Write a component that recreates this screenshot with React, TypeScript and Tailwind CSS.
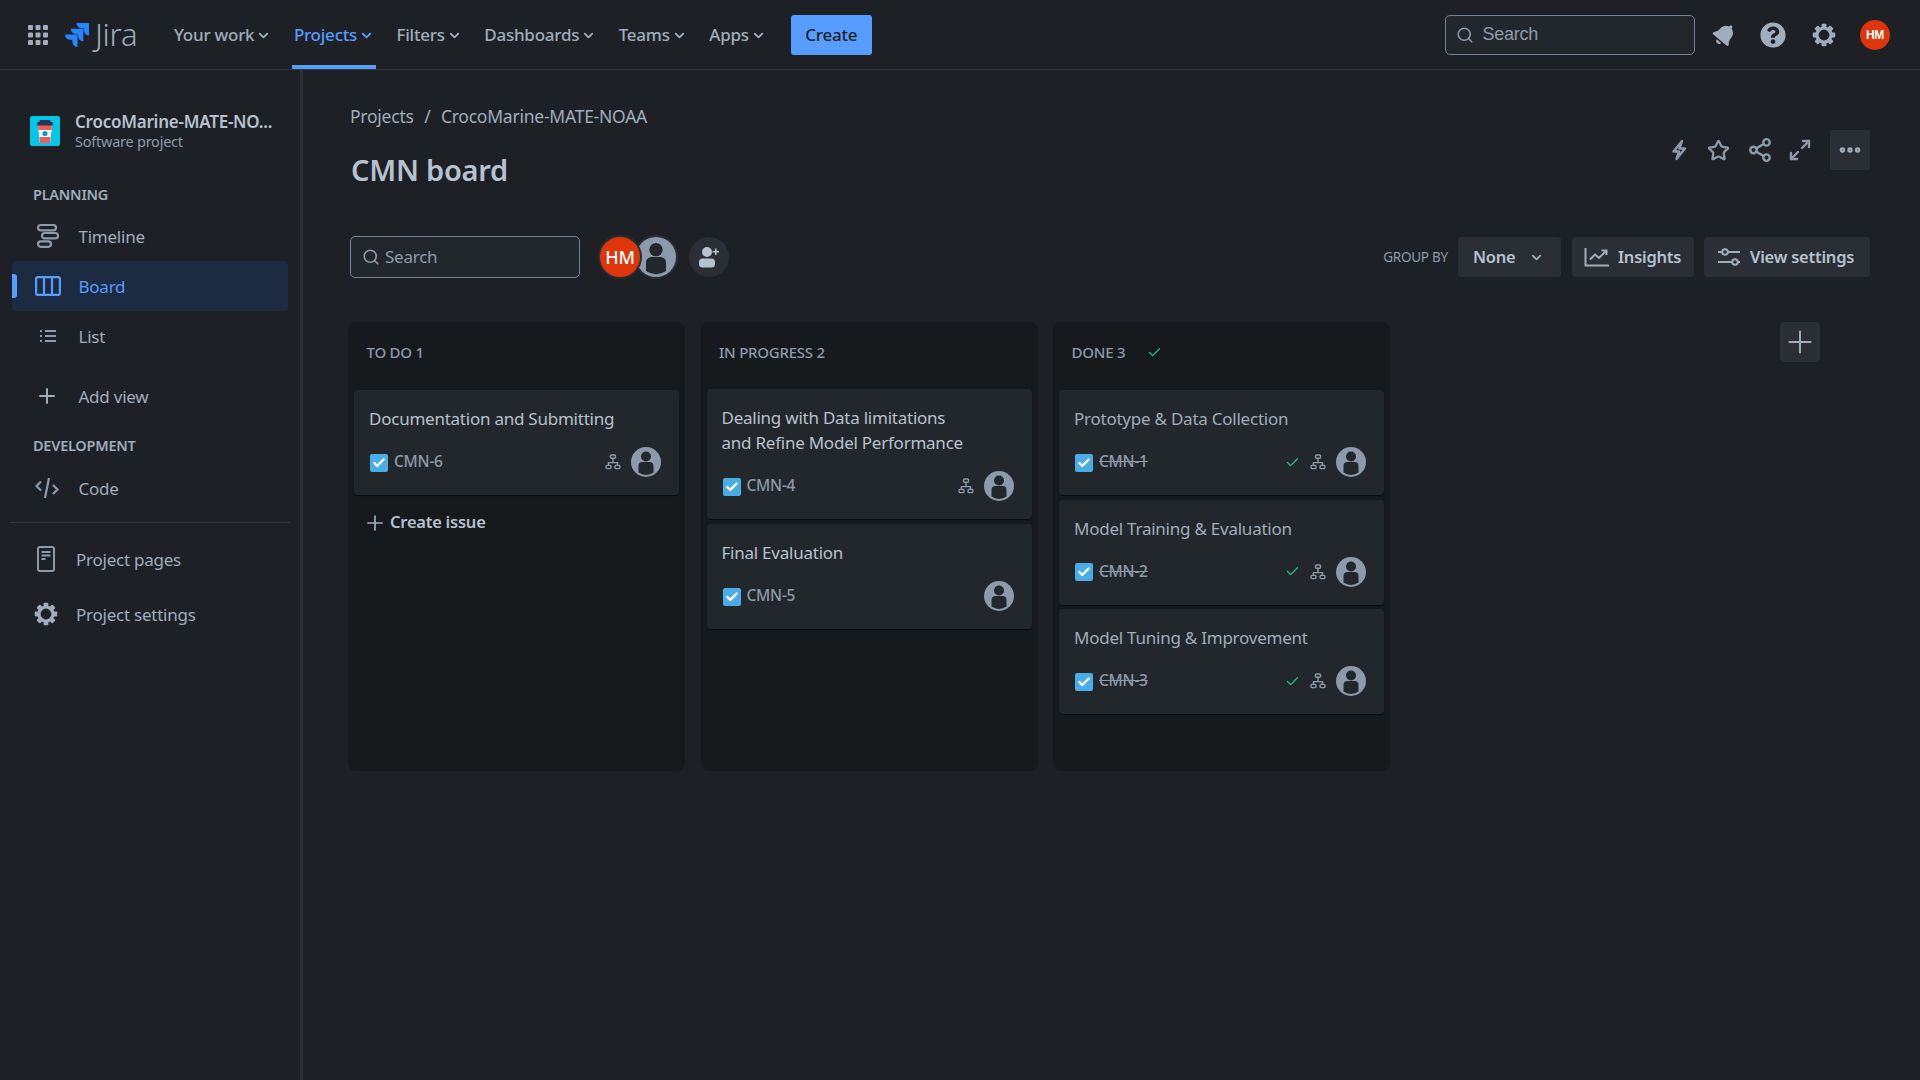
import { Check, ChevronDown, Ellipsis, Maximize2, Plus, Search, Share2, Star } from "lucide-react";
import { ReactNode } from "react";
import { FaBell, FaQuestionCircle } from "react-icons/fa";
import { SiJira } from "react-icons/si";

const font = "font-['Noto_Sans','Open_Sans',sans-serif] tracking-[-0.015em]";

function Gear({ size = 24 }: { size?: number }) {
    return (
        <svg width={size} height={size} viewBox="0 0 24 24" fill="none">
            {[0, 45, 90, 135, 180, 225, 270, 315].map((a) => (
                <rect key={a} x="9.6" y="0.8" width="4.8" height="4.4" rx="1" fill="#9FADBC" transform={`rotate(${a} 12 12)`} />
            ))}
            <circle cx="12" cy="12" r="7" stroke="#9FADBC" strokeWidth="3.2" />
        </svg>
    );
}

function WaffleIcon() {
    return (
        <svg width="20" height="20" viewBox="0 0 20 20" fill="#9FADBC">
            {[0, 7.5, 15].flatMap((y) =>
                [0, 7.5, 15].map((x) => <rect key={`${x}-${y}`} x={x} y={y} width="5" height="5" rx="1" />)
            )}
        </svg>
    );
}

function Avatar({ size = 36 }: { size?: number }) {
    return (
        <svg width={size} height={size} viewBox="0 0 30 30">
            <circle cx="15" cy="15" r="15" fill="#8C9BAB" />
            <circle cx="15" cy="9.5" r="5" fill="#22272B" />
            <path d="M7.5 19a4 4 0 0 1 4-4h7a4 4 0 0 1 4 4v6.5A14.5 14.5 0 0 1 15 28a14.5 14.5 0 0 1-7.5-2.5z" fill="#22272B" />
        </svg>
    );
}

function ChildIcon({ size = 16 }: { size?: number }) {
    return (
        <svg width={size} height={size} viewBox="0 0 16 16" fill="none" stroke="#8C9BAB" strokeWidth="1.4">
            <rect x="5.5" y="1" width="5" height="3.2" rx="1" />
            <rect x="1" y="11.4" width="5" height="3.2" rx="1" />
            <rect x="10" y="11.4" width="5" height="3.2" rx="1" />
            <path d="M8 4.2v4.4M3.5 11.4V8.6h9v2.8" />
        </svg>
    );
}

function TaskBox() {
    return (
        <span className="ml-[1px] mt-[1px] flex h-[18px] w-[18px] items-center justify-center rounded-[2px] bg-[#4BADE8]">
            <Check size={14} strokeWidth={4} color="#ffffff" />
        </span>
    );
}

function BoltIcon() {
    return (
        <svg width="16" height="22" viewBox="0 0 16 22" fill="none" stroke="#8C9BAB" strokeWidth="2.4" strokeLinejoin="round">
            <path d="M11 2 2.500 12.500H8L5.500 20 14 9.500H8.500z" />
        </svg>
    );
}

function TimelineIcon() {
    return (
        <svg width="24" height="26" viewBox="0 0 24 26" fill="none" stroke="#8C9BAB" strokeWidth="2.2">
            <rect x="2" y="2" width="18" height="5.4" rx="2.7" />
            <rect x="6" y="10" width="16" height="5.4" rx="2.7" />
            <rect x="2" y="18.4" width="13" height="5.4" rx="2.7" />
        </svg>
    );
}

function BoardIcon() {
    return (
        <svg width="26" height="20" viewBox="0 0 26 20" fill="none" stroke="#579DFF" strokeWidth="2.2">
            <rect x="1.1" y="1.1" width="23.8" height="17.8" rx="2" />
            <path d="M9 1v18M17 1v18" />
        </svg>
    );
}

function ListIcon() {
    return (
        <svg width="16" height="14" viewBox="0 0 16 14" fill="none" stroke="#8C9BAB" strokeWidth="2">
            <path d="M5 2h11M5 7h11M5 12h11" />
            <path d="M0 2h2M0 7h2M0 12h2" />
        </svg>
    );
}

function CodeIcon() {
    return (
        <svg width="24" height="22" viewBox="0 0 24 22" fill="none" stroke="#8C9BAB" strokeWidth="2.2">
            <path d="M6 4.5 1.5 9 6 13.5M18 8l4.5 4.5L18 17M14 1l-4 20" />
        </svg>
    );
}

function PageIcon() {
    return (
        <svg width="18" height="26" viewBox="0 0 18 26" fill="none" stroke="#8C9BAB" strokeWidth="2">
            <rect x="1" y="1" width="16" height="24" rx="2" />
            <path d="M4.5 6h9M4.5 9.5h9M4.5 13h4" />
        </svg>
    );
}

function ProjectIcon() {
    return (
        <svg width="30" height="30" viewBox="0 0 30 30" className="shrink-0">
            <rect width="30" height="30" rx="2" fill="#00C7E6" />
            <path d="M8 9h14l-1.6 17a1 1 0 0 1-1 1h-8.800a1 1 0 0 1-1-1z" fill="#FFFFFF" />
            <path d="M8 9h14l-.5 5h-13z" fill="#F15B50" />
            <path d="M9.400 21h11.200l-.5 5.500a1 1 0 0 1-1 .5h-8.200a1 1 0 0 1-1-.5z" fill="#F15B50" />
            <rect x="7" y="6" width="16" height="3.500" rx="1" fill="#253858" />
            <rect x="9.500" y="4" width="11" height="2.500" rx="1" fill="#253858" />
            <circle cx="15" cy="17.500" r="2.600" fill="#00A3BF" />
        </svg>
    );
}

function InsightsIcon() {
    return (
        <svg width="26" height="20" viewBox="0 0 26 20" fill="none" stroke="#9FADBC" strokeWidth="2">
            <path d="M1.500 1v17.500H25" />
            <path d="M6 12.500l5-5 4 3.500 7-7M17.500 3.500h5v4.500" />
        </svg>
    );
}

function SlidersIcon() {
    return (
        <svg width="24" height="20" viewBox="0 0 24 20" fill="none" stroke="#9FADBC" strokeWidth="2">
            <path d="M1 5h4M11 5h12M1 15h14M21 15h2" />
            <circle cx="8" cy="5" r="2.800" />
            <circle cx="18" cy="15" r="2.800" />
        </svg>
    );
}

function AddPeopleIcon() {
    return (
        <svg width="22" height="22" viewBox="0 0 22 22" fill="#B6C2CF">
            <circle cx="9" cy="6" r="5" />
            <rect x="1" y="12.500" width="16" height="9" rx="3.500" />
            <path d="M17 2.500h1.600V5H21v1.600h-2.400V9H17V6.600h-2.500V5H17z" />
        </svg>
    );
}

function NavItem({ label, active }: { label: string; active?: boolean }) {
    return (
        <div className={`relative flex h-[69px] items-center gap-[2px] px-[2px] pt-[1px] text-[17px] font-medium ${active ? "text-[#579DFF]" : "text-[#9FADBC]"}`}>
            <span>{label}</span>
            <ChevronDown size={15} strokeWidth={3} />
            {active && <div className="absolute inset-x-0 bottom-0 h-[4px] bg-[#579DFF]" />}
        </div>
    );
}

function SideItem({ icon, label, active, textX = "w-[43.5px]", className = "h-[50px]" }: { icon: ReactNode; label: string; active?: boolean; textX?: string; className?: string }) {
    return (
        <div className={`relative mx-[12px] flex items-center rounded-[4px] pl-[23px] text-[17px] ${className} ${active ? "bg-[#1C2B41] text-[#579DFF]" : "text-[#9FADBC]"}`}>
            {active && <div className="absolute left-0 top-[13px] h-[24px] w-[5px] rounded-r-[3px] bg-[#579DFF]" />}
            <div className={`flex shrink-0 justify-start ${textX}`}>{icon}</div>
            <span className="mt-[2px]">{label}</span>
        </div>
    );
}

function SideHeading({ label, className }: { label: string; className: string }) {
    return <div className={`pl-[33px] text-[14.5px] font-semibold text-[#9FADBC] ${className}`}>{label}</div>;
}

function Sidebar() {
    return (
        <aside className="flex w-[303px] shrink-0 flex-col border-r-[3px] border-[#2C3036]">
            <div className="flex items-center gap-[15px] pl-[30px] pt-[41px]">
                <ProjectIcon />
                <div className="flex flex-col">
                    <span className="text-[17px] font-semibold leading-[21px] text-[#B6C2CF]">CrocoMarine-MATE-NO...</span>
                    <span className="text-[14.5px] leading-[18px] text-[#8C9BAB]">Software project</span>
                </div>
            </div>
            <SideHeading label="PLANNING" className="mt-[33px] leading-[22px]" />
            <div className="mt-[6px] flex flex-col">
                <SideItem icon={<div className="pl-[1px]"><TimelineIcon /></div>} label="Timeline" />
                <SideItem icon={<BoardIcon />} label="Board" active />
                <SideItem icon={<div className="pl-[5px]"><ListIcon /></div>} label="List" />
            </div>
            <SideItem className="mt-[10px] h-[50px]" icon={<Plus size={24} strokeWidth={2} color="#9FADBC" />} label="Add view" />
            <SideHeading label="DEVELOPMENT" className="mt-[13px] leading-[22px]" />
            <SideItem className="mt-[7px] h-[50px]" icon={<CodeIcon />} label="Code" />
            <div className="mx-[10px] mt-[9px] h-px bg-[#31373D]" />
            <SideItem className="mt-[11px] h-[50px]" textX="w-[41px]" icon={<div className="pl-[2px]"><PageIcon /></div>} label="Project pages" />
            <SideItem className="mt-[5px] h-[50px]" textX="w-[41px]" icon={<div className="-ml-[1px]"><Gear size={24} /></div>} label="Project settings" />
        </aside>
    );
}

function Header() {
    return (
        <header className="flex h-[70px] shrink-0 items-center border-b border-[#31373D] pl-[28px] pr-[30px]">
            <WaffleIcon />
            <SiJira size={24} color="#2684FF" className="ml-[17px]" />
            <span className="ml-[6px] w-[42px] text-[31px] font-light leading-none text-[#9FADBC]">Jira</span>
            <nav className="ml-[35px] flex items-center gap-[18.5px]">
                <NavItem label="Your work" />
                <NavItem label="Projects" active />
                <NavItem label="Filters" />
                <NavItem label="Dashboards" />
                <NavItem label="Teams" />
                <NavItem label="Apps" />
            </nav>
            <button className="ml-[23px] h-[40px] w-[81px] rounded-[3px] bg-[#579DFF] pt-[1px] text-[17px] font-medium text-[#1D2125]">Create</button>
            <div className="ml-auto mr-[1px] flex h-[40px] w-[250px] items-center gap-[9px] rounded-[5px] border border-[#738496] bg-[#22272B] pl-[10px] font-['Liberation_Sans',sans-serif] text-[18px] text-[#8C9BAB]">
                <Search size={18} color="#8C9BAB" />
                <span>Search</span>
            </div>
            <FaBell size={23} color="#9FADBC" className="ml-[17px] rotate-[40deg]" />
            <FaQuestionCircle size={26} color="#9FADBC" className="ml-[24.5px]" />
            <div className="ml-[25.5px]"><Gear size={24} /></div>
            <div className="ml-[24.5px] flex h-[30px] w-[30px] items-center justify-center rounded-full bg-[#DE350B] font-['Liberation_Sans',sans-serif] text-[12px] font-bold text-white">HM</div>
        </header>
    );
}

type Issue = { title: string[]; id: string; done?: boolean; child?: boolean };

function IssueCard({ issue }: { issue: Issue }) {
    return (
        <div className="flex flex-col rounded-[4px] bg-[#22272B] pb-[18px] pl-[15px] pr-[18px] pt-[16px] shadow-[0_1px_1px_#0a0c0d]">
            <div className={`text-[17px] leading-[25px] ${issue.done ? "text-[#9FADBC]" : "text-[#B6C2CF]"}`}>
                {issue.title.map((line) => (
                    <div key={line}>{line}</div>
                ))}
            </div>
            <div className="mt-[16px] flex h-[30px] items-center">
                <TaskBox />
                <span className={`ml-[6px] text-[15.5px] font-medium text-[#8C9BAB] ${issue.done ? "line-through" : ""}`}>{issue.id}</span>
                <div className="ml-auto flex items-center">
                    {issue.done && <Check size={15} strokeWidth={2.2} color="#2ABB7F" className="mr-[10px]" />}
                    {issue.child && <ChildIcon />}
                    <div className="ml-[10px]"><Avatar size={30} /></div>
                </div>
            </div>
        </div>
    );
}

function Column({ title, done, issues, footer, headerHeight = "h-[68px]", gap = "gap-[5px]" }: { title: string; done?: boolean; issues: Issue[]; footer?: ReactNode; headerHeight?: string; gap?: string }) {
    return (
        <div className="flex h-[449px] w-[337px] flex-col rounded-[8px] bg-[#161A1D] px-[6px]">
            <div className={`flex shrink-0 items-center gap-[22px] pb-[7px] pl-[12.5px] text-[15px] font-medium text-[#8C9BAB] ${headerHeight}`}>
                <span>{title}</span>
                {done && <Check size={15} strokeWidth={2.2} color="#2ABB7F" />}
            </div>
            <div className={`flex flex-col ${gap}`}>
                {issues.map((issue) => (
                    <IssueCard key={issue.id} issue={issue} />
                ))}
            </div>
            {footer}
        </div>
    );
}

function ActionButton({ children, className }: { children: ReactNode; className: string }) {
    return <div className={`flex h-[40px] items-center rounded-[4px] bg-[#2A2F36] text-[16.5px] font-semibold text-[#B6C2CF] ${className}`}>{children}</div>;
}

function Board() {
    return (
        <main className="min-w-0 flex-1 pl-[47px] pr-[50px]">
            <div className="flex items-center pt-[33.5px] text-[17.5px] leading-[24px] text-[#9FADBC]">
                <span>Projects</span>
                <span className="mx-[10.5px]">/</span>
                <span>CrocoMarine-MATE-NOAA</span>
            </div>
            <div className="flex items-start justify-between">
                <h1 className="ml-[1px] mt-[22.5px] text-[29px] font-semibold leading-[40px] text-[#B6C2CF]">CMN board</h1>
                <div className="mt-[2.5px] flex items-center">
                    <div className="mr-[20px]"><BoltIcon /></div>
                    <Star size={23} strokeWidth={2.4} color="#8C9BAB" className="mr-[17px]" />
                    <Share2 size={26} strokeWidth={2.2} color="#8C9BAB" className="mr-[15px]" />
                    <Maximize2 size={24} strokeWidth={2.4} color="#8C9BAB" className="mr-[18px]" />
                    <div className="flex h-[40px] w-[40px] items-center justify-center rounded-[3px] bg-[#2A2F36]">
                        <Ellipsis size={26} strokeWidth={3} color="#9FADBC" />
                    </div>
                </div>
            </div>
            <div className="mt-[46px] flex h-[42px] items-center">
                <div className="flex h-[42px] w-[230px] items-center gap-[5px] rounded-[5px] border border-[#738496] bg-[#22272B] pl-[11px] text-[17px] text-[#8C9BAB]">
                    <Search size={18} strokeWidth={2.2} color="#8C9BAB" />
                    <span>Search</span>
                </div>
                <div className="ml-[18px] flex">
                    <div className="relative z-10 flex h-[44px] w-[44px] items-center justify-center rounded-full border-[2px] border-[#282E33] bg-[#DE350B] text-[18px] font-medium text-white">HM</div>
                    <div className="-ml-[8px] rounded-full border-[2px] border-[#282E33]"><Avatar size={40} /></div>
                </div>
                <div className="ml-[11px] flex h-[40px] w-[40px] items-center justify-center rounded-full bg-[#2A2F36]"><AddPeopleIcon /></div>
                <span className="ml-auto text-[13.5px] text-[#8C9BAB]">GROUP BY</span>
                <ActionButton className="ml-[10px] w-[103px] pl-[15px]">
                    <span>None</span>
                    <ChevronDown size={15} strokeWidth={3} color="#9FADBC" className="ml-[13px]" />
                </ActionButton>
                <ActionButton className="ml-[11px] w-[122px] gap-[8px] pl-[12px]">
                    <InsightsIcon />
                    <span>Insights</span>
                </ActionButton>
                <ActionButton className="ml-[10px] w-[166px] gap-[9px] pl-[13px]">
                    <SlidersIcon />
                    <span>View settings</span>
                </ActionButton>
            </div>
            <div className="-ml-[2px] mt-[44px] flex gap-[15.5px]">
                <Column
                    title="TO DO 1"
                    issues={[{ title: ["Documentation and Submitting"], id: "CMN-6", child: true }]}
                    footer={
                        <div className="mt-[11.5px] flex h-[32px] items-center gap-[3px] pl-[9px] text-[16.5px] font-semibold text-[#B6C2CF]">
                            <Plus size={24} strokeWidth={1.7} color="#9FADBC" />
                            <span>Create issue</span>
                        </div>
                    }
                />
                <Column
                    title="IN PROGRESS 2"
                    headerHeight="h-[67px]"
                    issues={[
                        { title: ["Dealing with Data limitations", "and Refine Model Performance"], id: "CMN-4", child: true },
                        { title: ["Final Evaluation"], id: "CMN-5" },
                    ]}
                />
                <Column
                    title="DONE 3"
                    done
                    gap="gap-[4.5px]"
                    issues={[
                        { title: ["Prototype & Data Collection"], id: "CMN-1", done: true, child: true },
                        { title: ["Model Training & Evaluation"], id: "CMN-2", done: true, child: true },
                        { title: ["Model Tuning & Improvement"], id: "CMN-3", done: true, child: true },
                    ]}
                />
                <div className="ml-auto mr-[50px] flex h-[40px] w-[40px] items-center justify-center rounded-[4px] bg-[#2A2F36]">
                    <Plus size={36} strokeWidth={1.3} color="#9FADBC" />
                </div>
            </div>
        </main>
    );
}

export default function App() {
    return (
        <div className={`flex h-screen w-screen flex-col overflow-hidden bg-[#1D2125] ${font}`}>
            <Header />
            <div className="flex min-h-0 flex-1">
                <Sidebar />
                <Board />
            </div>
        </div>
    );
}
